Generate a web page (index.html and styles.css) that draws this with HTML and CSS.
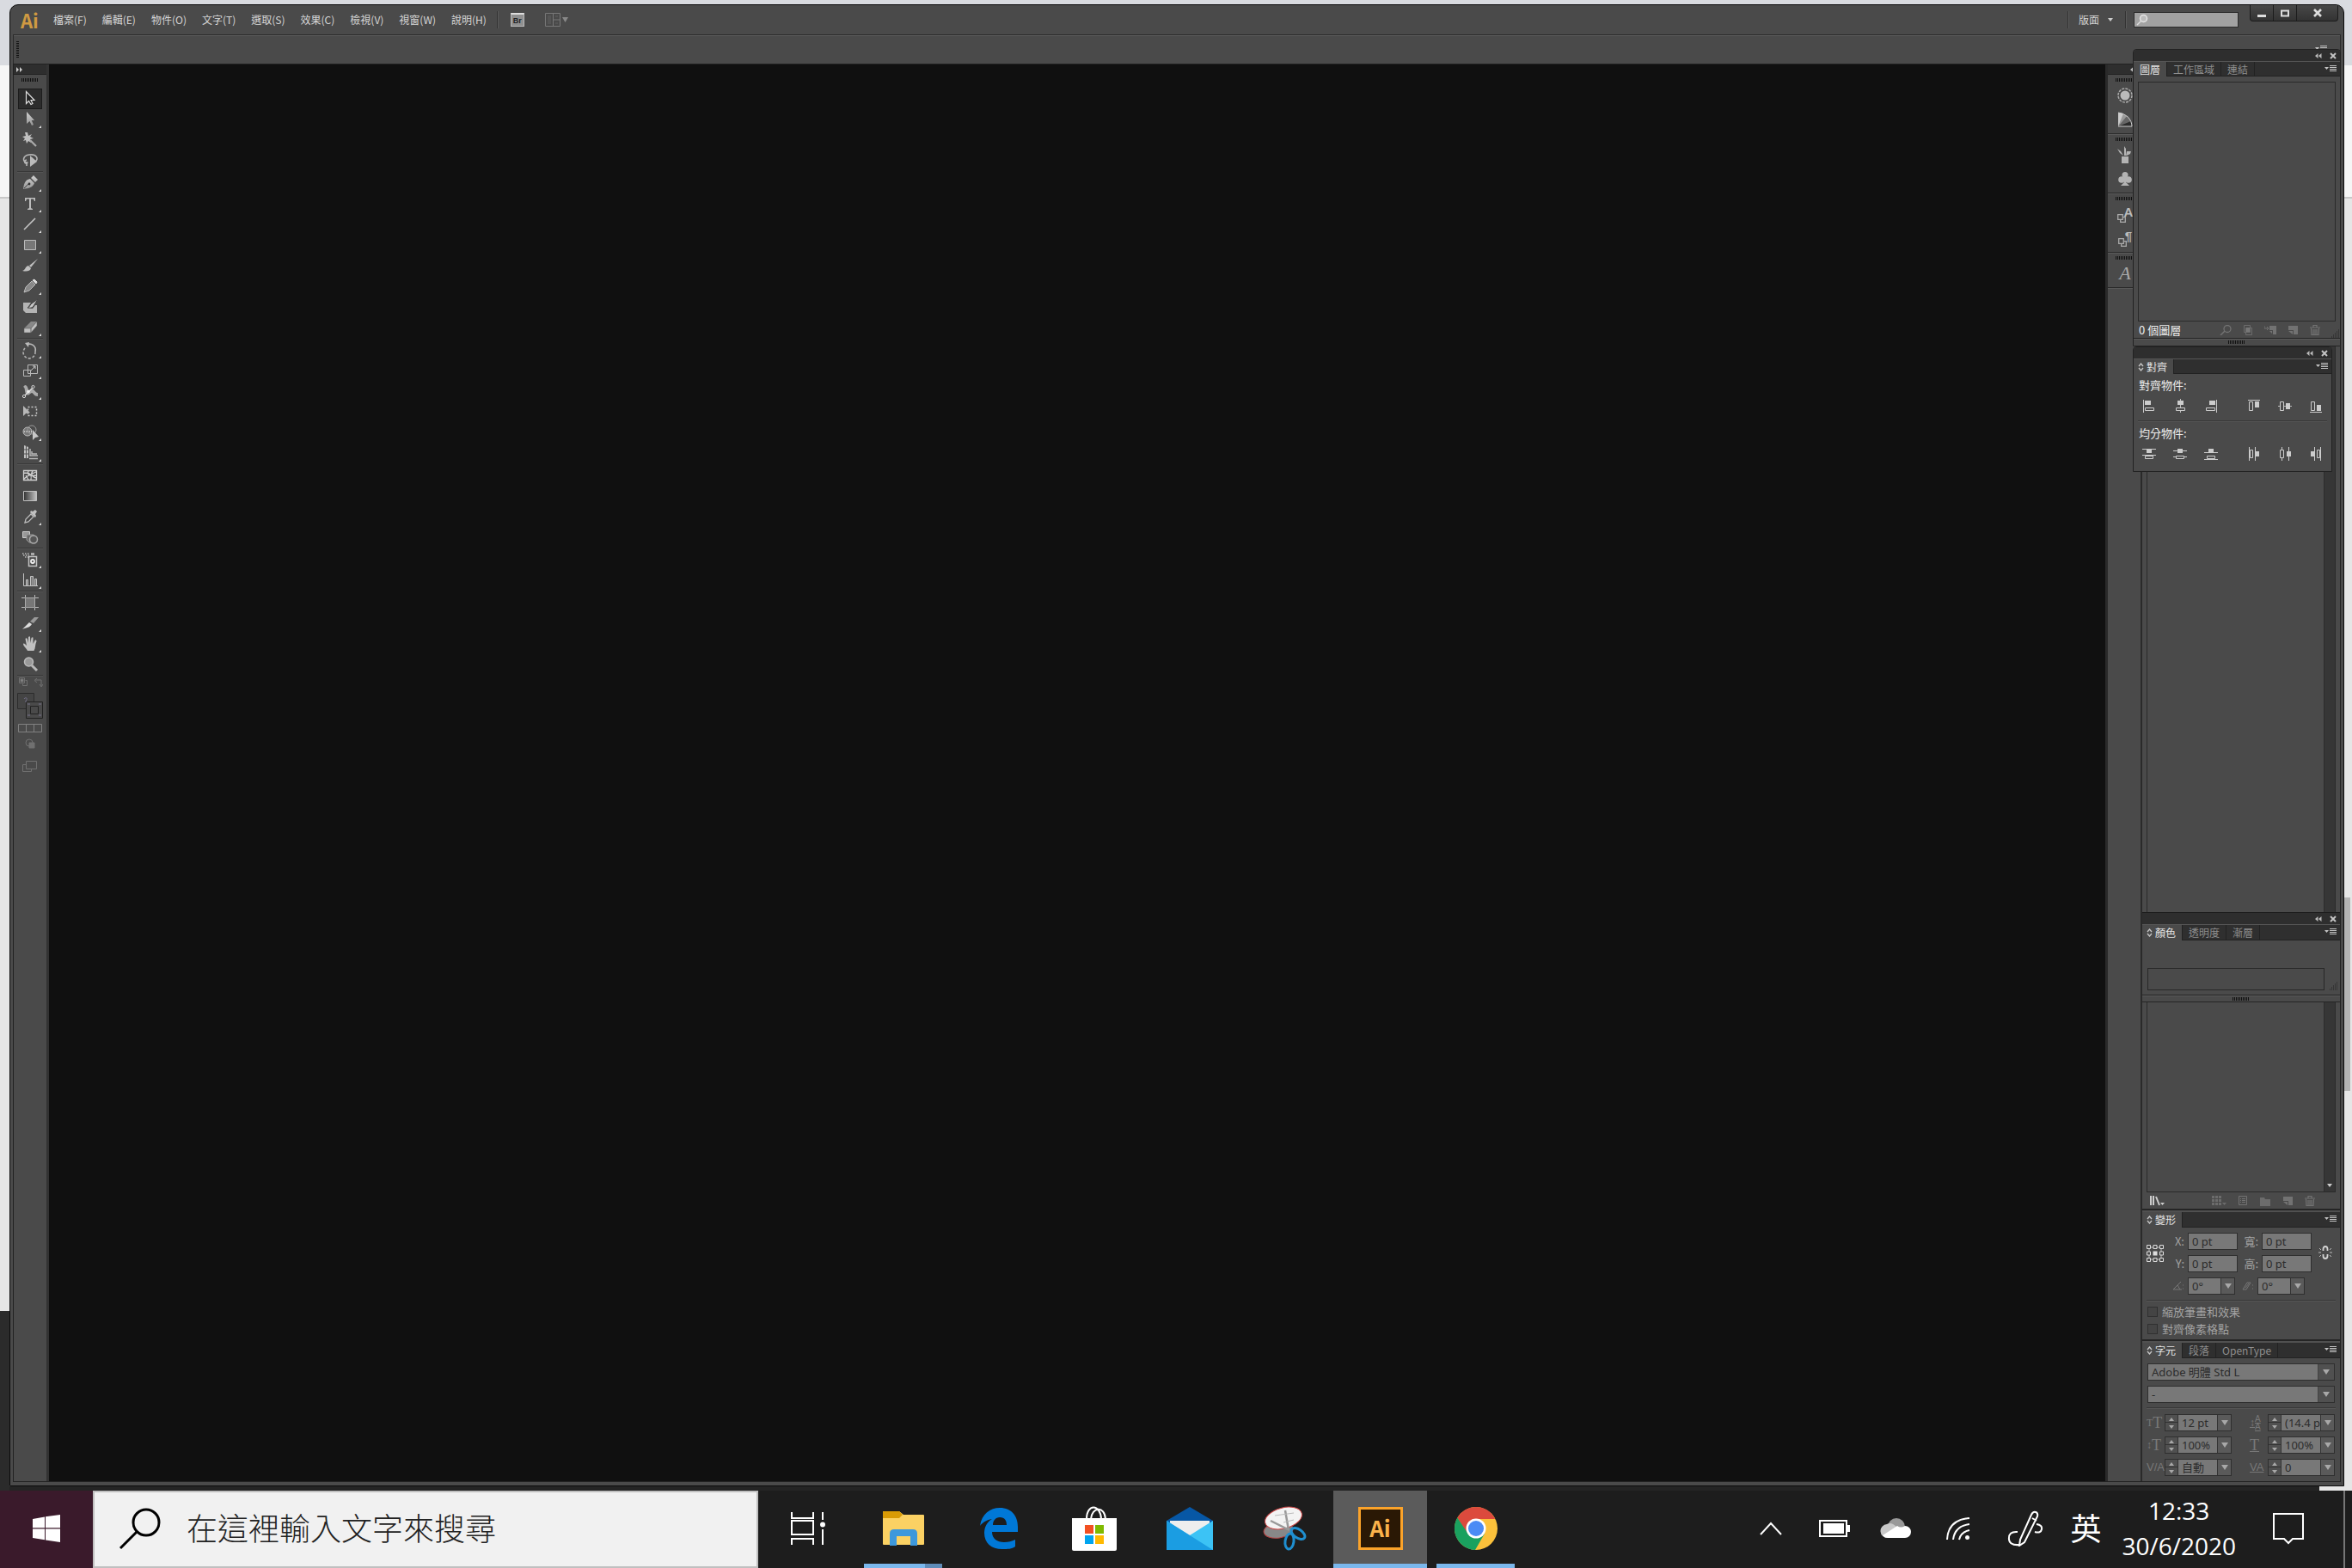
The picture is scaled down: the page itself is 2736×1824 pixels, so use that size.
FILE: index.html
```html
<!DOCTYPE html>
<html lang="zh-Hant">
<head>
<meta charset="utf-8">
<title>Ai</title>
<link rel="stylesheet" href="styles.css">
</head>
<body>
<svg class="defs" width="0" height="0" aria-hidden="true">
  <defs>
    <linearGradient id="metal" x1="0" y1="0" x2="0" y2="1"><stop offset="0" stop-color="#d0d0d0"/><stop offset="1" stop-color="#969696"/></linearGradient>
    <linearGradient id="fade"><stop offset="0" stop-color="#333"/><stop offset="1" stop-color="#c4c4c4"/></linearGradient>
    <symbol id="collapse" viewBox="0 0 8 8"><path d="M3.500 1v6L0 4zM7.500 1v6L4 4z" fill="#bbb"/></symbol>
    <symbol id="expand" viewBox="0 0 8 8"><path d="M0 1l3 3-3 3zM4 1l3 3-3 3z" fill="#ccc"/></symbol>
    <symbol id="close" viewBox="0 0 8 8"><path d="M1 1l6 6M7 1L1 7" stroke="#c4c4c4" stroke-width="2"/></symbol>
    <symbol id="menu" viewBox="0 0 14 10"><path d="M0 2h5L2.500 5z" fill="#c4c4c4"/><path d="M6 .5h8M6 2.500h8M6 4.500h8M6 6.500h8" stroke="#c4c4c4"/></symbol>
    <symbol id="updown" viewBox="0 0 7 10"><path d="M1 4l2.500-3L6 4M1 6l2.500 3L6 6" fill="none" stroke="#c8c8c8" stroke-width="1.300"/></symbol>
    <symbol id="grow" viewBox="0 0 10 10"><path d="M8 1h1M6 3h3M4 5h5M2 7h7M0 9h9" stroke="#222" stroke-dasharray="1 1"/></symbol>
    <symbol id="new" viewBox="0 0 14 12"><path d="M2 1h11v10H8V6H2z" fill="#727272"/><path d="M2 7h5v4z" fill="#727272"/></symbol>
    <symbol id="trash" viewBox="0 0 14 12"><path d="M1 3h12M5 2.500V.500h4v2M2.500 4l.5 7.500h8L11.500 4M5 5v6M7 5v6M9 5v6" fill="none" stroke="#727272" stroke-width="1.200"/></symbol>
    <symbol id="stacked" viewBox="0 0 10 10"><path d="M.7.7h5.600v5.600H.7z M3.700 6.300v3h5.600V3.700H6.300" fill="none" stroke="#aaa" stroke-width="1.300"/></symbol>
  </defs>
</svg>

<main class="stage">
<div class="app">
  <header class="menubar">
    <span class="logo">Ai</span>
    <nav class="menus">
      <a href="#">檔案(F)</a><a href="#">編輯(E)</a><a href="#">物件(O)</a><a href="#">文字(T)</a><a href="#">選取(S)</a><a href="#">效果(C)</a><a href="#">檢視(V)</a><a href="#">視窗(W)</a><a href="#">說明(H)</a>
    </nav>
    <i class="divider"></i>
    <button class="bridge" aria-label="Bridge">Br</button>
    <button class="arrange" aria-label="排列"><svg width="28" height="16" viewBox="0 0 28 16"><path d="M.5.5h17v15H.5zM9.500.5v15M9.500 8h8" fill="none" stroke="#777"/><path d="M3 3h4v10H3zM12 3h3v2h-3zM12 11h3v2h-3z" fill="#555"/><path d="M20 5h7l-3.500 6z" fill="#888"/></svg></button>
    <span class="spacer"></span>
    <i class="divider"></i>
    <button class="space-menu">版面 <i class="tri"></i></button>
    <i class="divider"></i>
    <label class="help"><svg width="14" height="14" viewBox="0 0 14 14"><circle cx="8.500" cy="5.500" r="4" fill="#bbb" stroke="#e4e4e4" stroke-width="1.500"/><path d="M5.500 8.500L1 13" stroke="#ddd" stroke-width="1.500"/></svg><input type="search" aria-label="搜尋"></label>
    <div class="winbtns">
      <button aria-label="最小化"><svg width="12" height="12" viewBox="0 0 12 12"><path d="M1 8h10v3H1z" fill="#ddd"/></svg></button>
      <button aria-label="最大化"><svg width="12" height="12" viewBox="0 0 12 12"><path d="M2 3.500h8v6H2z" fill="none" stroke="#ddd" stroke-width="2"/></svg></button>
      <button class="wide" aria-label="關閉"><svg width="12" height="12" viewBox="0 0 12 12"><path d="M2 2l8 8M10 2l-8 8" stroke="#ddd" stroke-width="2.600"/></svg></button>
    </div>
  </header>
  <div class="control"><i class="grip-v"></i><svg class="control-menu" width="14" height="10"><use href="#menu"/></svg></div>

  <div class="work">
    <aside class="toolbox">
      <div class="dockhead"><svg width="8" height="8"><use href="#expand"/></svg></div>
      <i class="grip"></i>
      <div class="tools">
        <button class="on" aria-label="選取"><svg viewBox="0 0 28 24"><path d="M9.500 3.500v14l3-3 2.500 4 2-1-2-4h4z" fill="#222" stroke="#ddd" stroke-width="1.200"/></svg></button>
        <button aria-label="直接選取"><svg viewBox="0 0 28 24"><path d="M10 3v14l3.500-3 2.500 5 2-1-2.300-5H19z" fill="url(#metal)"/><path d="M27 19v3h-3z" fill="#ddd"/></svg></button>
        <button aria-label="魔術棒"><svg viewBox="0 0 28 24"><path d="M11 3l1 4 4-2-2 3 4 2-4 1 1 4-3-2-2 3-1-4-3 1 2-3-3-2 4-1-1-4z" fill="#c0c0c0"/><path d="M14 12l7 7" stroke="#aaa" stroke-width="2.200"/></svg></button>
        <button aria-label="套索"><svg viewBox="0 0 28 24"><path d="M10 14c-5-1-5-8 3-9 9-1 11 5 7 8M10 11c-4 1-2 5 0 4s0-3 0 3" fill="none" stroke="#b4b4b4" stroke-width="1.600"/><path d="M14 6v13l8-6z" fill="#bbb"/></svg></button>
        <hr>
        <button aria-label="鋼筆"><svg viewBox="0 0 28 24"><path d="M6 19c1-9 4-11 8-12l5 5c-2 5-6 6-13 7zM15 6l3-3 5 5-3 3z" fill="url(#metal)"/><circle cx="13" cy="13" r="1.400" fill="#333"/><path d="M7 18l5-5" stroke="#444"/><path d="M27 19v3h-3z" fill="#ddd"/></svg></button>
        <button class="type" aria-label="文字"><svg viewBox="0 0 28 24"><path d="M8 5h12v4h-1l-1-2.500h-3V17l2 1v1h-6v-1l2-1V6.500h-3L9 9H8z" fill="#bcbcbc"/><path d="M27 19v3h-3z" fill="#ddd"/></svg></button>
        <button aria-label="線段"><svg viewBox="0 0 28 24"><path d="M7 18L20 5" stroke="#c4c4c4" stroke-width="1.600"/><path d="M27 19v3h-3z" fill="#ddd"/></svg></button>
        <button aria-label="矩形"><svg viewBox="0 0 28 24"><path d="M7.500 6.500h13v11h-13z" fill="#777" stroke="#bbb"/><path d="M27 19v3h-3z" fill="#ddd"/></svg></button>
        <button aria-label="筆刷"><svg viewBox="0 0 28 24"><path d="M23 4l-8 10-2-2zM12 12l3 3c-1 4-6 4-10 3 4-1 3-5 7-6z" fill="#c0c0c0"/></svg></button>
        <button aria-label="鉛筆"><svg viewBox="0 0 28 24"><path d="M7 19l2-6 7-7 4 4-7 7z" fill="#888" stroke="#bbb"/><path d="M17 5l2-1 3 3-1 2z" fill="#ddd" stroke="#ddd"/><path d="M27 19v3h-3z" fill="#ddd"/></svg></button>
        <button aria-label="點滴筆刷"><svg viewBox="0 0 28 24"><path d="M6 7h9l-4 6 6 1 3-4h2v9H9l-3-3z" fill="#b4b4b4"/><path d="M23 3l-5 8c-2 3-5 2-7 2 3-1 3-4 5-5z" fill="#c8c8c8" stroke="#444"/></svg></button>
        <button aria-label="橡皮擦"><svg viewBox="0 0 28 24"><path d="M7 13l8-8h7l-7 8z" fill="#888"/><path d="M7 13h8v5H7zM15 13l7-8v5l-7 8z" fill="#c0c0c0" stroke="#555" stroke-width=".5"/><path d="M27 19v3h-3z" fill="#ddd"/></svg></button>
        <hr>
        <button aria-label="旋轉"><svg viewBox="0 0 28 24"><path d="M10 6a7 7 0 0 1 10 8" fill="none" stroke="#b8b8b8" stroke-width="1.600"/><path d="M20 14a7 7 0 1 1-12-4" fill="none" stroke="#b0b0b0" stroke-width="1.600" stroke-dasharray="3 2"/><path d="M8 4l5-1-1 6z" fill="#bbb"/><path d="M27 19v3h-3z" fill="#ddd"/></svg></button>
        <button aria-label="縮放"><svg viewBox="0 0 28 24"><path d="M11.500 5.500h11v10h-11zM6.500 11.500h8v7h-8z" fill="none" stroke="#b8b8b8"/><path d="M15 12l5-5M17 7h3v3" fill="none" stroke="#ccc"/><path d="M27 19v3h-3z" fill="#ddd"/></svg></button>
        <button aria-label="寬度"><svg viewBox="0 0 28 24"><path d="M8 5c4 0 3 6 5 6s3-3 5-1 3 4 5 4v4c-5 0-5-4-7-4s-3 4-6 2-1-8-4-9z" fill="#aaa"/><path d="M7 18L18 7" stroke="#ddd" stroke-width="1.500"/><circle cx="7" cy="18" r="1.600" fill="#444" stroke="#ddd"/><circle cx="12" cy="12.500" r="1.800" fill="#eee"/><circle cx="17.500" cy="7" r="1.600" fill="#444" stroke="#ddd"/><path d="M27 19v3h-3z" fill="#ddd"/></svg></button>
        <button aria-label="任意變形"><svg viewBox="0 0 28 24"><path d="M11.500 6.500h10v10h-10z" fill="none" stroke="#ccc" stroke-width="1.500" stroke-dasharray="2 2"/><path d="M6 5v12l3-3 5-1z" fill="#b8b8b8"/></svg></button>
        <button aria-label="形狀建立程式"><svg viewBox="0 0 28 24"><circle cx="11" cy="11" r="5" fill="#777" stroke="#bbb"/><circle cx="16" cy="9" r="5" fill="none" stroke="#999"/><path d="M7 11h10" stroke="#fff" stroke-dasharray="1 1"/><path d="M17 9v12l3-3 4-1z" fill="#c8c8c8"/><path d="M27 19v3h-3z" fill="#ddd"/></svg></button>
        <button aria-label="透視格點"><svg viewBox="0 0 28 24"><path d="M7 3l5 2v13H7z" fill="#c0c0c0"/><path d="M9.500 3v16M7 8h5M7 13h5" stroke="#555"/><path d="M14 7v8h9M13 18.500h10M16 10v3h6" fill="none" stroke="#b8b8b8" stroke-width="1.500"/><path d="M27 19v3h-3z" fill="#ddd"/></svg></button>
        <hr>
        <button aria-label="網格"><svg viewBox="0 0 28 24"><path d="M6.500 6.500h15v11h-15zM7 9c8 0 9 3 8 8M12 7c-2 5 3 6 9 5M7 16c4-4 9-6 14-8M17 7c-3 4 0 7 4 8M9 12l3 5" fill="none" stroke="#d0d0d0" stroke-width="1.300"/></svg></button>
        <button aria-label="漸層"><svg viewBox="0 0 28 24"><path d="M6.500 6.500h15v11h-15z" fill="url(#fade)" stroke="#c0c0c0"/></svg></button>
        <button aria-label="檢色滴管"><svg viewBox="0 0 28 24"><path d="M8 19l1-4 6-6 3 3-6 6z" fill="#444" stroke="#bbb" stroke-width="1.300"/><path d="M14 7l6 6 1-2-1-2 2-3-2-2-3 2-2-1z" fill="#c0c0c0"/><path d="M27 19v3h-3z" fill="#ddd"/></svg></button>
        <button aria-label="漸變"><svg viewBox="0 0 28 24"><path d="M5.500 5.500h8v7h-8z" fill="#999" stroke="#ccc"/><path d="M10 9h8l2 3-2 6h-5l-3-3z" fill="#666" stroke="#999"/><circle cx="18" cy="14.500" r="4.500" fill="#555" stroke="#aaa" stroke-width="1.500"/></svg></button>
        <hr>
        <button aria-label="符號噴灑器"><svg viewBox="0 0 28 24"><path d="M5 5h8M6 7h7M8 9h4" stroke="#bbb" stroke-width="1.500" stroke-dasharray="1.500 1.500"/><path d="M15 4h4v3h-4z" fill="#aaa"/><path d="M12.500 8.500h9v11h-9z" fill="none" stroke="#c4c4c4" stroke-width="1.500"/><circle cx="17" cy="14" r="2" fill="none" stroke="#eee" stroke-width="1.800"/><path d="M27 19v3h-3z" fill="#ddd"/></svg></button>
        <button aria-label="長條圖"><svg viewBox="0 0 28 24"><path d="M6.500 4v14.500H23" fill="none" stroke="#c4c4c4"/><path d="M9.500 11.500h2v7h-2zM14.500 7.500h3v11h-3zM19.500 10.500h2v8h-2z" fill="#777" stroke="#c4c4c4"/><path d="M27 19v3h-3z" fill="#ddd"/></svg></button>
        <hr>
        <button aria-label="工作區域"><svg viewBox="0 0 28 24"><path d="M8.500 6.500h11v11h-11z" fill="#777" stroke="#aaa"/><path d="M8.500 3v3M19.500 3v3M8.500 18v3M19.500 18v3M4 6.500h4M20 6.500h4M4 17.500h4M20 17.500h4" stroke="#bbb"/></svg></button>
        <button aria-label="切片"><svg viewBox="0 0 28 24"><path d="M5 19l8-8 3 2c-2 4-6 4-11 6z" fill="#ddd"/><path d="M14 10l5-5h5l-6 7z" fill="#999"/><path d="M27 19v3h-3z" fill="#ddd"/></svg></button>
        <button aria-label="手形"><svg viewBox="0 0 28 24"><path d="M11 20c-1-3-5-5-5-8 1-1 2 0 4 2L8.500 6c1-1 2-1 2.500 1l1 4V4c1-1 2-1 2 0l.5 7 1-6c1-1 2-1 2 0v7l2-4c1-1 2 0 2 1-2 4-1 8-3 11z" fill="#c0c0c0"/><path d="M27 19v3h-3z" fill="#ddd"/></svg></button>
        <button aria-label="縮放顯示"><svg viewBox="0 0 28 24"><circle cx="12.500" cy="9" r="5" fill="#999" stroke="#bbb" stroke-width="1.500"/><path d="M16 13l6 6" stroke="#b8b8b8" stroke-width="3"/></svg></button>
        <hr>
      </div>
      <svg class="fills" width="30" height="116" viewBox="0 0 30 116" fill="none" stroke="#707070">
        <path d="M6.500 8.500v2h5v-6h-2M2.500 1.500h6v6h-6z"/><path d="M4 3h3v3H4z" fill="#888"/><path d="M21 4h7v7M23 2l-3 2.500 3 2.500M26 9l2 3 2-3"/>
        <path d="M.5 19.500h19v18h-19z" fill="#444" stroke="#2c2c2c"/><path d="M10.500 29.500h19v19h-19z" fill="#4a4a4a" stroke="#222"/><path d="M15.500 34.500h9v9h-9z" stroke="#222"/><path d="M8 26c2-3 5 0 2 2v2M12 32h3M25 32h3M12 45h3M25 45h3" stroke="#75718a"/>
        <path d="M1.500 55.500h27v9h-27zM10.500 55v10M19.500 55v10" stroke="#808080"/>
        <circle cx="14" cy="77" r="4"/><path d="M14 77h6v6h-6z" fill="#707070"/><path d="M10.500 98.500h12v9h-12z M10.500 102.500h-4v8h10v-3"/>
      </svg>
    </aside>

    <section class="canvas" aria-label="畫布"></section>

    <aside class="icondock">
      <div class="dockhead"><svg width="8" height="8"><use href="#collapse"/></svg></div>
      <div class="group"><i class="grip"></i>
        <button aria-label="顏色"><svg width="20" height="20" viewBox="0 0 20 20"><circle cx="10" cy="10" r="5.500" fill="#bbb"/><circle cx="10" cy="10" r="8" fill="none" stroke="#aaa" stroke-width="1.500" stroke-dasharray="3 1.200"/></svg></button>
        <button aria-label="色彩參考"><svg width="20" height="20" viewBox="0 0 20 20"><path d="M2 18V2c9 1 16 8 16 16z" fill="#999"/><path d="M2 18L13 5c3 3 5 8 5 13z" fill="#666"/><path d="M2 18L17 12l1 6z" fill="#2c2c2c"/><path d="M2 18V2l6 1z" fill="#ccc"/><path d="M2 2c9 1 16 8 16 16H2" fill="none" stroke="#ccc"/></svg></button>
      </div>
      <div class="group"><i class="grip"></i>
        <button aria-label="筆刷"><svg width="20" height="20" viewBox="0 0 20 20"><path d="M6 12h8v8H6zM9 0l2 3v8H9zM1 3l4 3 3 5-4-3zM11 11l1-5h5l-1 3-4 2z" fill="#b4b4b4"/></svg></button>
        <button aria-label="符號"><svg width="20" height="20" viewBox="0 0 20 20"><circle cx="10" cy="5.500" r="3.500" fill="#b4b4b4"/><circle cx="6" cy="11" r="3.800" fill="#b4b4b4"/><circle cx="14" cy="11" r="3.800" fill="#b4b4b4"/><path d="M9 7h2v7l4 4H5l4-4z" fill="#b4b4b4"/></svg></button>
      </div>
      <div class="group"><i class="grip"></i>
        <button class="glyph" aria-label="字元樣式"><svg width="10" height="10"><use href="#stacked"/></svg><b>A</b></button>
        <button class="glyph" aria-label="段落樣式"><svg width="10" height="10"><use href="#stacked"/></svg><b>¶</b></button>
      </div>
      <div class="group last"><i class="grip"></i>
        <button class="script" aria-label="字符">A</button>
      </div>
    </aside>

    <aside class="dock">
      <div class="list upper"><i class="track"></i></div>
      <section class="panel raised">
        <div class="bar"><svg width="8" height="8"><use href="#collapse"/></svg><svg width="8" height="8"><use href="#close"/></svg></div>
        <div class="tabs"><button class="tab on"><svg width="7" height="10"><use href="#updown"/></svg>顏色</button><button class="tab">透明度</button><button class="tab">漸層</button><svg class="pm" width="14" height="10"><use href="#menu"/></svg></div>
        <div class="color"><div class="ramp"></div><svg width="10" height="10"><use href="#grow"/></svg></div>
        <div class="foot-grip"><i class="grip"></i></div>
      </section>
      <div class="list lower"><i class="track"><i class="tri"></i></i></div>
      <div class="swatch-foot">
        <svg width="20" height="14" viewBox="0 0 20 14"><path d="M2 1v11M5 1v11M8 2l4 10" stroke="#ccc" stroke-width="2"/><path d="M13 9h5l-2.500 3z" fill="#ccc"/></svg>
        <span class="spacer"></span>
        <svg width="17" height="12" viewBox="0 0 17 12"><path d="M0 0h11v11H0z" fill="#6c6c6c"/><path d="M0 3.500h11M0 7.500h11M3.500 0v11M7.500 0v11" stroke="#4a4a4a"/><path d="M12 8h5l-2.500 3z" fill="#6c6c6c"/></svg>
        <svg width="14" height="12" viewBox="0 0 14 12"><path d="M2.500.5h9v10h-9zM4 3.500h1M6 3.500h4M4 5.500h1M6 5.500h4M4 7.500h1M6 7.500h4" fill="none" stroke="#727272"/></svg>
        <svg width="14" height="12" viewBox="0 0 14 12"><path d="M1 2h5l1 2h6v8H1z" fill="#6c6c6c"/></svg>
        <svg width="14" height="12"><use href="#new"/></svg>
        <svg width="14" height="12"><use href="#trash"/></svg>
      </div>

      <section class="panel transform">
        <div class="tabs"><button class="tab on"><svg width="7" height="10"><use href="#updown"/></svg>變形</button><svg class="pm" width="14" height="10"><use href="#menu"/></svg></div>
        <div class="xform">
          <svg class="ref" width="20" height="20" viewBox="0 0 20 20"><path d="M3 3h14v14H3z" fill="none" stroke="#bbb"/><g fill="#4a4a4a" stroke="#ddd"><path d="M.5.5h4v4h-4zM8 .5h4v4H8zM15.500.5h4v4h-4zM.5 8h4v4h-4zM15.500 8h4v4h-4zM.5 15.500h4v4h-4zM8 15.500h4v4H8zM15.500 15.500h4v4h-4z"/></g><path d="M7.500 7.500h5v5h-5z" fill="#ddd"/></svg>
          <div class="rows">
            <div class="row"><label for="fx">X:</label><input id="fx" class="field" value="0 pt"><label for="fw">寬:</label><input id="fw" class="field" value="0 pt"></div>
            <div class="row"><label for="fy">Y:</label><input id="fy" class="field" value="0 pt"><label for="fh">高:</label><input id="fh" class="field" value="0 pt"></div>
            <div class="row">
              <label for="fa" class="dim" aria-label="旋轉"><svg width="14" height="12" viewBox="0 0 14 12"><path d="M10 1L1 10h10M6 5l3 5" fill="none" stroke="#777"/><path d="M12 5h1M12 9h1" stroke="#777"/></svg></label><span class="combo angle"><select id="fa"><option>0°</option></select><i class="arrow"></i></span>
              <label for="fs" class="dim" aria-label="傾斜"><svg width="14" height="12" viewBox="0 0 14 12"><path d="M1 10l5-8h4l-5 8zM4 8l4-5" fill="none" stroke="#777"/><path d="M12 5h1M12 9h1" stroke="#777"/></svg></label><span class="combo angle"><select id="fs"><option>0°</option></select><i class="arrow"></i></span>
            </div>
          </div>
          <svg class="link" width="16" height="16" viewBox="0 0 16 16"><path d="M5.500 6V4q0-3 2.500-3t2.500 3v2M5.500 10v2q0 3 2.500 3t2.500-3v-2" fill="none" stroke="#d4d4d4" stroke-width="1.800"/><path d="M0 8h3M13 8h3M1 3l2 2M15 3l-2 2M1 13l2-2M15 13l-2-2" stroke="#bbb"/></svg>
        </div>
        <hr>
        <div class="checks">
          <label><input type="checkbox">縮放筆畫和效果</label>
          <label><input type="checkbox">對齊像素格點</label>
        </div>
      </section>

      <section class="panel character">
        <div class="tabs"><button class="tab on"><svg width="7" height="10"><use href="#updown"/></svg>字元</button><button class="tab">段落</button><button class="tab">OpenType</button><svg class="pm" width="14" height="10"><use href="#menu"/></svg></div>
        <div class="fonts">
          <span class="combo"><select aria-label="字體"><option>Adobe 明體 Std L</option></select><i class="arrow dark"></i></span>
          <span class="combo"><select aria-label="字體樣式"><option>-</option></select><i class="arrow dark"></i></span>
        </div>
        <hr>
        <div class="metrics">
          <div class="metric"><label for="m1" class="ic"><small>T</small>T</label><span class="combo"><span class="spin"><i class="up"></i><i class="down"></i></span><input id="m1" value="12 pt"><i class="arrow"></i></span></div>
          <div class="metric"><label for="m2" class="ic lead"><small>↕</small><span>A<br>A</span></label><span class="combo"><span class="spin"><i class="up"></i><i class="down"></i></span><input id="m2" value="(14.4 pt)"><i class="arrow"></i></span></div>
          <div class="metric"><label for="m3" class="ic"><small>↕</small>T</label><span class="combo"><span class="spin"><i class="up"></i><i class="down"></i></span><input id="m3" value="100%"><i class="arrow"></i></span></div>
          <div class="metric"><label for="m4" class="ic under">T</label><span class="combo"><span class="spin"><i class="up"></i><i class="down"></i></span><input id="m4" value="100%"><i class="arrow"></i></span></div>
          <div class="metric"><label for="m5" class="ic sans">V/A</label><span class="combo"><span class="spin"><i class="up"></i><i class="down"></i></span><input id="m5" value="自動"><i class="arrow"></i></span></div>
          <div class="metric"><label for="m6" class="ic sans under">VA</label><span class="combo"><span class="spin"><i class="up"></i><i class="down"></i></span><input id="m6" value="0"><i class="arrow"></i></span></div>
        </div>
      </section>
    </aside>
  </div>

  <section class="panel float layers">
    <div class="bar"><svg width="8" height="8"><use href="#collapse"/></svg><svg width="8" height="8"><use href="#close"/></svg></div>
    <div class="tabs"><button class="tab on">圖層</button><button class="tab">工作區域</button><button class="tab">連結</button><svg class="pm" width="14" height="10"><use href="#menu"/></svg></div>
    <div class="layer-list"></div>
    <div class="layer-foot">
      <span>0 個圖層</span><span class="spacer"></span>
      <svg width="14" height="12" viewBox="0 0 14 12"><circle cx="9" cy="4.500" r="4" fill="none" stroke="#727272" stroke-width="1.300"/><path d="M6 7l-5 5" stroke="#727272" stroke-width="1.500"/></svg>
      <svg width="14" height="12" viewBox="0 0 14 12"><path d="M2.500.5h7v8h-7zM4.500 3.500h7v8h-7z" fill="none" stroke="#6c6c6c"/><path d="M5 3h4v5H5z" fill="#777"/></svg>
      <svg width="14" height="12" viewBox="0 0 14 12"><path d="M0 1v3h4M3 2l2 2-2 2" fill="none" stroke="#727272"/><path d="M6 1h8v10h-4V6H6zM6 7h3v3z" fill="#727272"/></svg>
      <svg width="14" height="12"><use href="#new"/></svg>
      <svg width="14" height="12"><use href="#trash"/></svg>
      <svg class="g" width="10" height="10"><use href="#grow"/></svg>
    </div>
    <div class="foot-grip"><i class="grip"></i></div>
  </section>

  <section class="panel float align">
    <div class="bar"><svg width="8" height="8"><use href="#collapse"/></svg><svg width="8" height="8"><use href="#close"/></svg></div>
    <div class="tabs"><button class="tab on"><svg width="7" height="10"><use href="#updown"/></svg>對齊</button><svg class="pm" width="14" height="10"><use href="#menu"/></svg></div>
    <div class="align-body">
      <p>對齊物件:</p>
      <div class="aicons">
        <button aria-label="靠左"><svg viewBox="0 0 16 16"><path d="M1.500 1v15" stroke="#ccc"/><path d="M3 2h7v5H3z" fill="#ccc"/><path d="M3.500 10.500h10v3h-10z" fill="none" stroke="#ccc"/></svg></button>
        <button aria-label="水平居中"><svg viewBox="0 0 16 16"><path d="M8.500 0v16" stroke="#bbb"/><path d="M5 2h7v5H5z" fill="#ccc"/><path d="M3.500 10.500h10v3h-10z" fill="#4a4a4a" stroke="#ccc"/></svg></button>
        <button aria-label="靠右"><svg viewBox="0 0 16 16"><path d="M14.500 1v15" stroke="#ccc"/><path d="M6 2h7v5H6z" fill="#ccc"/><path d="M2.500 10.500h10v3h-10z" fill="none" stroke="#ccc"/></svg></button>
        <button class="second" aria-label="靠上"><svg viewBox="0 0 16 16"><path d="M1 1.500h14" stroke="#ccc"/><path d="M9 3h5v7H9z" fill="#ccc"/><path d="M2.500 3.500h4v10h-4z" fill="none" stroke="#ccc"/></svg></button>
        <button aria-label="垂直居中"><svg viewBox="0 0 16 16"><path d="M0 8.500h16" stroke="#bbb"/><path d="M9 5h5v7H9z" fill="#ccc"/><path d="M2.500 3.500h4v10h-4z" fill="#4a4a4a" stroke="#ccc"/></svg></button>
        <button aria-label="靠下"><svg viewBox="0 0 16 16"><path d="M1 15.500h14" stroke="#ccc"/><path d="M9 7h5v7H9z" fill="#ccc"/><path d="M2.500 3.500h4v10h-4z" fill="none" stroke="#ccc"/></svg></button>
      </div>
      <hr>
      <p>均分物件:</p>
      <div class="aicons">
        <button aria-label="垂直依上緣"><svg viewBox="0 0 16 16"><path d="M0 2.500h16M0 9.500h16" stroke="#ccc"/><path d="M5 3h6v4H5z" fill="#ccc"/><path d="M3.500 10.500h9v3h-9z" fill="none" stroke="#ccc"/></svg></button>
        <button aria-label="垂直依中線"><svg viewBox="0 0 16 16"><path d="M0 4.500h16M0 11.500h16" stroke="#ccc"/><path d="M5 2h6v5H5z" fill="#ccc"/><path d="M3.500 10.500h9v3h-9z" fill="#4a4a4a" stroke="#ccc"/></svg></button>
        <button aria-label="垂直依下緣"><svg viewBox="0 0 16 16"><path d="M0 6.500h16M0 14.500h16" stroke="#ccc"/><path d="M5 2h6v4H5z" fill="#ccc"/><path d="M3.500 10.500h9v3h-9z" fill="none" stroke="#ccc"/></svg></button>
        <button class="second" aria-label="水平依左緣"><svg viewBox="0 0 16 16"><path d="M2.500 0v16M9.500 0v16" stroke="#ccc"/><path d="M10 5h4v6h-4z" fill="#ccc"/><path d="M3.500 3.500h3v9h-3z" fill="none" stroke="#ccc"/></svg></button>
        <button aria-label="水平依中線"><svg viewBox="0 0 16 16"><path d="M4.500 0v16M12.500 0v16" stroke="#ccc"/><path d="M10 5h5v6h-5z" fill="#ccc"/><path d="M2.500 3.500h4v9h-4z" fill="#4a4a4a" stroke="#ccc"/></svg></button>
        <button aria-label="水平依右緣"><svg viewBox="0 0 16 16"><path d="M6.500 0v16M13.500 0v16" stroke="#ccc"/><path d="M2 5h4v6H2z" fill="#ccc"/><path d="M9.500 3.500h3v9h-3z" fill="none" stroke="#ccc"/></svg></button>
      </div>
    </div>
  </section>
</div>
</main>

<footer class="taskbar">
  <button class="start" aria-label="開始"><svg width="34" height="34" viewBox="0 0 34 34" fill="#fff"><path d="M1 6l14-2.500v12.800H1zM16 3.300L33 1v15.300H16zM1 17.500h14v12.800L1 28zM16 17.500h17V33l-17-2.500z"/></svg></button>
  <label class="search"><svg width="50" height="50" viewBox="0 0 50 50" fill="none" stroke="#000" stroke-width="3"><circle cx="32" cy="18" r="15"/><path d="M21.500 28.500L2 48"/></svg><input type="text" placeholder="在這裡輸入文字來搜尋" aria-label="搜尋"></label>
  <nav class="apps">
    <button aria-label="工作檢視"><svg width="42" height="42" viewBox="0 0 42 42" fill="none" stroke="#fff" stroke-width="2"><path d="M2 2v7h25V2M2 12h25v16H2zM2 40v-7h25v7M38 2v9M38 22v18"/><circle cx="38" cy="16.500" r="2" fill="#fff"/></svg></button>
    <button class="open multi" aria-label="檔案總管"><svg width="50" height="42" viewBox="0 0 50 42"><path d="M1 2q0-1 1-1h18l5 4h23q1 0 1 1v33q0 1-1 1H2q-1 0-1-1z" fill="#fbd163"/><path d="M1 2q0-1 1-1h18l4 4-4 4H1z" fill="#d99b05"/><path d="M9 41V27q0-5 5-5h22q5 0 5 5v14h-8V30H17v11z" fill="#3d98dc"/></svg></button>
    <button aria-label="Edge"><svg width="46" height="50" viewBox="0 0 46 50"><path d="M1 22C3 8 13 1 24 1c14 0 21 10 21 22v6H15c0 8 6 12 14 12 5 0 9-1 13-3v8c-4 3-9 3-15 3C14 49 6 42 6 30c0-7 4-13 9-16-7 1-12 5-14 8zM16 21h16c0-5-2-9-8-9-5 0-8 4-8 9z" fill="#0078d7"/></svg></button>
    <button aria-label="Microsoft Store"><svg width="54" height="54" viewBox="0 0 54 54"><path d="M18 16C18-2 34-2 35 16M23 16C24 2 39 0 40 16" fill="none" stroke="#fff" stroke-width="2"/><path d="M1 15h52v36q0 2-2 2H3q-2 0-2-2z" fill="#fff"/><path d="M16 23h10v10H16z" fill="#f25022"/><path d="M28 23h10v10H28z" fill="#7fba00"/><path d="M16 35h10v10H16z" fill="#00a4ef"/><path d="M28 35h10v10H28z" fill="#ffb900"/></svg></button>
    <button aria-label="郵件"><svg width="56" height="52" viewBox="0 0 56 52"><path d="M1 17L28 1l27 16v10H1z" fill="#0757a5"/><path d="M5 17h46v18H5z" fill="#eee"/><path d="M1 17l27 17 27-17v34H1z" fill="#3cc3f5"/><path d="M1 17l54 34H1z" fill="#1b9de2"/></svg></button>
    <button aria-label="剪取工具"><svg width="52" height="52" viewBox="0 0 52 52"><ellipse cx="18" cy="28" rx="17" ry="9" fill="#888" transform="rotate(-8 18 28)" stroke="#b44"/><ellipse cx="24" cy="14" rx="22" ry="12" fill="#f3f3f3" transform="rotate(-15 24 14)" stroke="#c44"/><path d="M26 5l4 23M9 17l22 11" stroke="#999" stroke-width="2.500"/><path d="M14 11l22-3M24 19l12-3" stroke="#bbb"/><g fill="none" stroke="#1f8fd0" stroke-width="3"><ellipse cx="41" cy="32" rx="9" ry="5" transform="rotate(35 41 32)"/><ellipse cx="31" cy="41" rx="5" ry="9" transform="rotate(8 31 41)"/></g></svg></button>
    <button class="open active" aria-label="Illustrator"><span class="ai">Ai</span></button>
    <button class="open" aria-label="Chrome"><svg width="52" height="52" viewBox="0 0 52 52"><circle cx="26" cy="26" r="25" fill="#fbc13b"/><path d="M4.300 13.500A25 25 0 0 1 47.700 13.500L48 15H26L15 32z" fill="#dc4a3d"/><path d="M4.300 13.500A25 25 0 0 0 25 51l11-19-20-1z" fill="#1aa15f"/><circle cx="26" cy="26" r="11.500" fill="#fff"/><circle cx="26" cy="26" r="9" fill="#4b8bf5"/></svg></button>
  </nav>
  <div class="tray">
    <svg width="28" height="16" viewBox="0 0 28 16"><path d="M2 15L14 2l12 13" fill="none" stroke="#fff" stroke-width="2"/></svg>
    <svg width="36" height="20" viewBox="0 0 36 20"><path d="M1 1h31v18H1z" fill="none" stroke="#fff" stroke-width="2"/><path d="M5 4h24v12H5zM33 6h3v8h-3z" fill="#fff"/></svg>
    <svg class="cloud" width="38" height="24" viewBox="0 0 38 24"><circle cx="19" cy="10" r="10" fill="#999"/><path d="M9 23A8 8 0 0 1 8 7q5-3 11 3l-12 12z" fill="#c8c8c8"/><path d="M3 20L20 9q4 3 9 0a7 7 0 0 1 0 14H9q-4 0-6-3z" fill="#fff"/></svg>
    <svg width="30" height="28" viewBox="0 0 30 28" fill="none" stroke="#fff" stroke-width="2"><path d="M2 27Q3 4 28 2M9 27Q11 11 28 9M16 27Q18 18 28 16"/><circle cx="25.500" cy="24.500" r="2.500" fill="#fff" stroke="none"/></svg>
    <svg width="42" height="42" viewBox="0 0 42 42" fill="none" stroke="#fff" stroke-width="2"><path d="M15 34L28 5q2-4 5-3t2 5L20 37l-6 4zM29 9l5 3M12 25Q1 24 2 34q1 7 12 6M34 16q7 1 6 6t-8 3"/></svg>
    <span class="ime">英</span>
    <time class="clock"><span>12:33</span><span>30/6/2020</span></time>
    <button class="note" aria-label="通知"><svg width="38" height="38" viewBox="0 0 38 38"><path d="M2 2h34v29H24l-5 5-5-5H2z" fill="none" stroke="#fff" stroke-width="2"/></svg></button>
  </div>
</footer>
</body>
</html>
```
FILE: styles.css
```css
* { box-sizing: border-box; }
html, body { height: 100%; }
body {
  margin: 0;
  display: flex;
  flex-direction: column;
  background: #1d1d1d;
  color: #d6d6d6;
  font: 12px/16px "Noto Sans CJK TC", sans-serif;
  overflow: hidden;
}
button, input, select { font: inherit; color: inherit; border: 0; padding: 0; margin: 0; background: none; appearance: none; border-radius: 0; outline: 0; min-width: 0; }
button { display: flex; align-items: center; justify-content: center; }
a { color: inherit; text-decoration: none; }
hr { border: 0; margin: 0; height: 2px; background: #383838; border-bottom: 1px solid #555; flex: none; }
svg { display: block; flex: none; }
i { display: block; flex: none; }
p { margin: 0; }
.defs { position: absolute; }
.spacer { flex: 1; }

/* Desktop behind the application window */
.stage {
  flex: 1;
  min-height: 0;
  padding: 5px 9px 5px 11px;
  background:
    linear-gradient(#b4b4b4, #b4b4b4) right 2px top 1044px / 7px 225px no-repeat,
    linear-gradient(#2b2b2b, #2b2b2b) left bottom / 11px 209px no-repeat,
    linear-gradient(#242424, #242424) left bottom / calc(100% - 38px) 5px no-repeat,
    linear-gradient(#d9dbe0 0 76px, #f6f6f6 76px 229px, #c8c8c8 229px 231px, #e6e6e6 231px);
}
.app {
  position: relative;
  height: 100%;
  display: flex;
  flex-direction: column;
  padding: 0 3px 4px;
  background: #4a4a4a;
  border: 1px solid #0a0a0a;
  border-radius: 10px 10px 0 0;
}

/* Menu bar */
.menubar { height: 34px; flex: none; display: flex; align-items: center; padding-left: 9px; }
.logo { width: 38px; font-size: 22px; font-weight: 700; line-height: 24px; color: #cf9a42; }
.menus { display: flex; gap: 18px; margin-right: 12px; padding-bottom: 1px; }
.divider { width: 2px; height: 20px; background: #333; border-right: 1px solid #5a5a5a; }
.bridge { width: 16px; height: 16px; margin: 0 24px 0 14px; background: #909090; border: 1px solid #bbb; border-top: 2px solid #ddd; color: #222; font: 700 9px/12px "Liberation Sans", sans-serif; }
.space-menu { padding: 0 14px 0 11px; gap: 10px; }
.tri { border: 3px solid transparent; border-top: 4px solid #ccc; border-bottom: 0; }
.help { width: 122px; height: 18px; margin: 0 13px 0 8px; display: flex; align-items: center; background: #a2a2a2; border: 1px solid #2c2c2c; padding-left: 2px; }
.help input { flex: 1; }
.winbtns { display: flex; align-self: flex-start; height: 19px; margin-right: 3px; border: 1px solid #1c1c1c; border-top: 0; border-radius: 0 0 4px 4px; background: linear-gradient(#484848, #333); }
.winbtns button { width: 27px; border-right: 1px solid #1c1c1c; }
.winbtns .wide { width: 47px; border: 0; }

.control { height: 34px; flex: none; display: flex; align-items: center; justify-content: space-between; padding: 0 15px 0 3px; border: 1px solid #2a2a2a; border-bottom: 0; box-shadow: inset 0 1px #5e5e5e; }
.grip-v { width: 3px; height: 20px; background: repeating-linear-gradient(#111 0 1px, #4a4a4a 1px 2px); }
.grip { width: 20px; height: 4px; background: repeating-linear-gradient(90deg, #111 0 1px, #4a4a4a 1px 2px); }

/* Workspace columns */
.work { flex: 1; min-height: 0; display: grid; grid-template-columns: 41px 1fr 41px 232px; border: 1px solid #222; }
.canvas { background: #101010; }
.dockhead { height: 12px; display: flex; align-items: center; padding-left: 3px; background: #2e2e2e; border-bottom: 1px solid #222; }
.toolbox { display: flex; flex-direction: column; border-right: 3px solid #333; }
.toolbox .grip { margin: 4px 0 8px 9px; }
.tools { display: flex; flex-direction: column; align-items: center; width: 38px; }
.tools button { width: 28px; height: 24px; }
.tools svg { width: 28px; height: 24px; }
.tools .on { background: #2c2c2c; border: 1px solid #1c1c1c; }
.tools hr { width: 30px; }
.fills { margin-left: 4px; }

.icondock { border-left: 3px solid #2a2a2a; }
.icondock .dockhead { padding-left: 26px; }
.group { display: flex; flex-direction: column; padding-bottom: 2px; border-bottom: 1px solid #2a2a2a; box-shadow: 0 1px #5a5a5a; }
.group .grip { margin: 4px 0 2px 9px; }
.group button { width: 20px; height: 28px; margin-left: 10px; }
.group .glyph { align-items: center; }
.glyph svg { margin-top: 10px; }
.glyph b { font: 700 15px/16px "Liberation Sans", sans-serif; color: #bbb; margin: -4px 0 0 -2px; }
.group .script { font: italic 22px/24px "Liberation Serif", serif; color: #aaa; }

/* Docked panels */
.dock { display: flex; flex-direction: column; min-height: 0; border-left: 2px solid #2a2a2a; }
.list { display: flex; justify-content: flex-end; margin: 0 5px; border: 1px solid #2a2a2a; }
.upper { flex: 1; border-width: 0 1px; }
.lower { height: 221px; flex: none; border-top: 0; }
.track { width: 13px; background: #363636; border-left: 1px solid #2c2c2c; display: flex; align-items: flex-end; justify-content: center; padding-bottom: 5px; }
.panel { flex: none; background: #4a4a4a; }
.bar { height: 13px; display: flex; align-items: center; justify-content: flex-end; gap: 9px; padding-right: 4px; background: #2e2e2e; }
.tabs { height: 19px; display: flex; background: #2f2f2f; border-top: 1px solid #555; box-shadow: inset 0 -1px #222; }
.tab { padding: 0 7px; gap: 3px; color: #8e8e8e; border-right: 1px solid #222; }
.tab.on { background: #4a4a4a; color: #e4e4e4; }
.tab svg { margin-left: -2px; }
.pm { margin: 4px 4px 0 auto; }
.raised { border-top: 1px solid #1c1c1c; }
.color { height: 63px; display: flex; align-items: flex-end; padding: 0 2px 5px 6px; gap: 6px; }
.ramp { flex: 1; height: 26px; border: 1px solid #282828; }
.foot-grip { height: 9px; display: flex; align-items: center; justify-content: center; border: 1px solid #242424; border-width: 1px 0; box-shadow: inset 0 1px #5a5a5a; }
.swatch-foot { height: 21px; flex: none; display: flex; align-items: center; gap: 12px; padding: 0 28px 0 8px; border-bottom: 2px solid #252525; }

.transform .tabs, .character .tabs { border-top: 2px solid #505050; height: 20px; font-size: 12px; }
.transform { border-bottom: 2px solid #252525; font-size: 13px; color: #a2a2a2; }
.xform { display: flex; align-items: center; padding: 6px 9px 6px 5px; }
.rows { flex: 1; display: grid; gap: 6px; }
.row { display: flex; align-items: center; height: 20px; }
.row label { width: 28px; padding-right: 4px; text-align: right; display: flex; justify-content: flex-end; flex: none; white-space: nowrap; }
.row .dim { width: 26px; }
.row .dim:first-child { width: 28px; }
.field { width: 58px; height: 20px; padding-left: 4px; background: #787878; border: 1px solid #2f2f2f; color: #2c2c2c; font: 13px/16px "Noto Sans", "Noto Sans CJK TC", sans-serif; }
.ref { margin-bottom: 24px; }
.link { margin-bottom: 26px; }
.transform > hr, .character > hr, .align-body hr { margin: 0 5px; }
.checks { padding: 2px 6px; }
.checks label { display: flex; align-items: center; height: 20px; gap: 5px; }
.checks input { width: 12px; height: 12px; background: #444; border: 1px solid #303030; }

.combo { display: flex; width: 100%; height: 20px; background: #787878; border: 1px solid #2f2f2f; color: #2c2c2c; font: 13px/16px "Noto Sans", "Noto Sans CJK TC", sans-serif; }
.combo.angle { width: 55px; }
.combo select, .combo input { flex: 1; width: 0; padding-left: 4px; }
.arrow { width: 16px; border-left: 1px solid #333; background: #5a5a5a; display: flex; align-items: center; justify-content: center; }
.arrow::before, .spin i { content: ""; border: 4px solid transparent; border-top: 6px solid #a8a8a8; border-bottom: 0; }
.arrow.dark { width: 19px; background: #505050; border-color: #444; }
.spin { width: 15px; display: flex; flex-direction: column; justify-content: space-around; align-items: center; background: linear-gradient(#505050 8px, #333 8px 9px, #505050 9px); border-right: 1px solid #333; }
.spin i { border-width: 4px 3px 0; }
.spin i.up { border: 3px solid transparent; border-bottom: 4px solid #a8a8a8; border-top: 0; }
.fonts { display: grid; gap: 6px; padding: 6px 6px 5px; }
.metrics { display: flex; flex-wrap: wrap; justify-content: space-between; gap: 6px 0; padding: 6px 6px 6px 5px; }
.metric { display: flex; align-items: center; width: 99px; height: 20px; }
.metric .ic { width: 21px; flex: none; font: 18px/18px "Liberation Serif", serif; color: #787878; display: flex; align-items: center; }
.ic small { font-size: 12px; }
.metric .lead { font: 10px/9px "Liberation Sans", sans-serif; text-decoration: underline; }
.metric .sans { font: 13px/16px "Liberation Sans", sans-serif; }
.metric .under { text-decoration: underline; }

/* Floating panels over the docks */
.float { position: absolute; border: 1px solid #222; border-radius: 4px 4px 0 0; overflow: hidden; }
.layers { top: 51px; right: 3px; width: 242px; }
.align { top: 397px; right: 13px; width: 232px; }
.layer-list { height: 279px; margin: 6px 5px 0; border: 1px solid #2a2a2a; }
.layer-foot { height: 19px; display: flex; align-items: center; gap: 12px; padding-left: 6px; font-size: 13px; color: #eee; }
.layer-foot .g { align-self: flex-end; }
.layers .tabs, .align .tabs { height: 18px; }
.layers .foot-grip { border-bottom: 0; }
.align-body { padding: 4px 0 3px; font-size: 13px; line-height: 18px; color: #eee; }
.align-body p { padding-left: 6px; }
.aicons { display: flex; gap: 20px; padding: 7px 0 9px 10px; }
.aicons + hr { margin-bottom: 4px; }
.aicons .second { margin-left: 14px; }
.aicons svg { width: 16px; height: 16px; }

/* Taskbar */
.taskbar { height: 90px; flex: none; display: flex; background: #1d1d1d; color: #fff; }
.start { width: 108px; padding-bottom: 2px; background: #3a1a2b; }
.search { width: 774px; display: flex; align-items: center; gap: 29px; padding: 0 0 2px 28px; background: #f1f1f1; border: 2px solid #c0c0c0; }
.search input { flex: 1; height: 64px; padding-bottom: 4px; font-size: 36px; font-weight: 300; color: #222; }
.search input::placeholder { color: #222; opacity: 1; }
.apps { display: flex; gap: 2px; padding-left: 3px; }
.apps button { width: 109px; padding-bottom: 2px; }
.apps .open { background: linear-gradient(#7ab7ec, #7ab7ec) center bottom / 91px 5px no-repeat; }
.apps .multi { background: linear-gradient(90deg, #7ab7ec 71px, #5f8cb8 71px) center bottom / 91px 5px no-repeat; }
.apps .active { background: linear-gradient(#7ab7ec, #7ab7ec) center bottom / 100% 5px no-repeat #5b5b5b; }
.ai { width: 52px; height: 50px; background: #2a1805; border: 3px solid #fba32a; font-size: 26px; line-height: 42px; font-weight: 700; color: #fbb24a; }
.tray { display: flex; align-items: center; margin-left: auto; margin-right: 8px; padding: 0 45px 2px 0; gap: 42px; border-right: 2px solid #777; }
.cloud { margin: 0 -4px 0 -7px; }
.ime { font-size: 36px; line-height: 40px; margin-left: -11px; padding-bottom: 4px; }
.clock { display: flex; flex-direction: column; align-items: center; margin-left: -18px; font: 28px/41px "Open Sans", "Noto Sans", sans-serif; }
```
